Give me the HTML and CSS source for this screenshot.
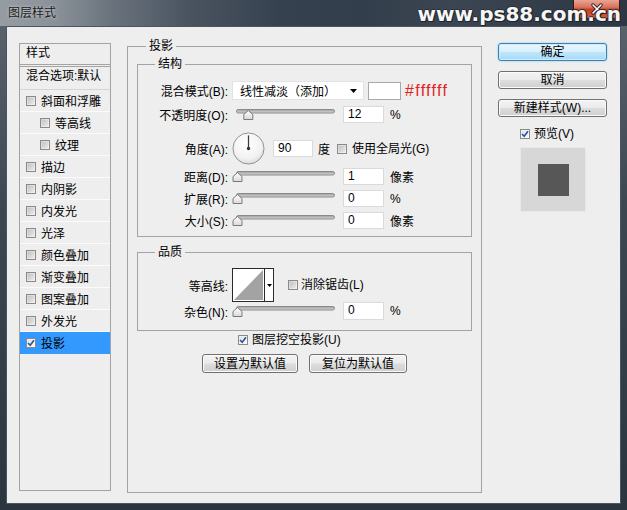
FILE: index.html
```html
<!DOCTYPE html>
<html lang="zh-CN">
<head>
<meta charset="utf-8">
<title>图层样式</title>
<link rel="stylesheet" href="styles.css">
</head>
<body>
<svg class="defs" width="0" height="0" aria-hidden="true">
  <defs>
    <linearGradient id="trackg" x1="0" y1="0" x2="0" y2="1">
      <stop offset="0" stop-color="#9c9c9c"/>
      <stop offset="1" stop-color="#dadada"/>
    </linearGradient>
    <linearGradient id="thumbg" x1="0" y1="0" x2="0" y2="1">
      <stop offset="0" stop-color="#ffffff"/>
      <stop offset="1" stop-color="#d9d9d9"/>
    </linearGradient>
    <radialGradient id="dialg" cx="0.45" cy="0.35" r="0.7">
      <stop offset="0" stop-color="#ffffff"/>
      <stop offset="0.7" stop-color="#f1f1f1"/>
      <stop offset="1" stop-color="#d4d4d4"/>
    </radialGradient>
  </defs>
</svg>
<div class="window">
  <div class="titlebar">
    <span class="title">图层样式</span>
    <span class="close">
      <svg width="14" height="12" viewBox="0 0 14 12"><path d="M3 2 L11 10 M11 2 L3 10" stroke="#3a1a14" stroke-width="3.2" stroke-linecap="round"/><path d="M3 2 L11 10 M11 2 L3 10" stroke="#ffffff" stroke-width="1.6" stroke-linecap="round"/></svg>
    </span>
    <span class="watermark">www.ps88.com.cn</span>
  </div>
  <div class="frame">
    <div class="client">
      <div class="layers">
        <div class="layers-head">样式</div>
        <div class="layers-blend">混合选项:默认</div>
        <div class="layer"><span class="cb"></span>斜面和浮雕</div>
        <div class="layer sub"><span class="cb"></span>等高线</div>
        <div class="layer sub"><span class="cb"></span>纹理</div>
        <div class="layer"><span class="cb"></span>描边</div>
        <div class="layer"><span class="cb"></span>内阴影</div>
        <div class="layer"><span class="cb"></span>内发光</div>
        <div class="layer"><span class="cb"></span>光泽</div>
        <div class="layer"><span class="cb"></span>颜色叠加</div>
        <div class="layer"><span class="cb"></span>渐变叠加</div>
        <div class="layer"><span class="cb"></span>图案叠加</div>
        <div class="layer"><span class="cb"></span>外发光</div>
        <div class="layer active"><span class="cb checked"><svg width="8" height="8" viewBox="0 0 8 8"><path d="M1 4 L3.2 6.3 L7 1.2" fill="none" stroke="#2c57a3" stroke-width="1.7"/></svg></span>投影</div>
      </div>

      <div class="group main">
        <div class="legend main-legend">投影</div>

        <div class="group sub-group structure">
          <div class="legend">结构</div>

          <div class="row row-blend">
            <span class="label">混合模式(B):</span>
            <div class="select"><span>线性减淡（添加）</span><svg width="7" height="4" viewBox="0 0 7 4"><polygon points="0,0 7,0 3.5,4" fill="#000"/></svg></div>
            <span class="swatch"></span>
            <span class="hex">#ffffff</span>
          </div>

          <div class="row row-field gap6">
            <span class="label">不透明度(O):</span>
            <svg class="slider" width="105" height="13" viewBox="0 0 105 13"><rect x="4.5" y="1.5" width="98" height="3.5" rx="1.75" fill="url(#trackg)" stroke="#8a8a8a"/><path d="M16.3 2.5 L20.8 6.5 V11.5 H11.8 V6.5 Z" fill="url(#thumbg)" stroke="#7a7a7a"/></svg>
            <span class="field">12</span>
            <span class="unit">%</span>
          </div>

          <div class="row row-angle">
            <span class="label">角度(A):</span>
            <svg class="dial" width="34" height="34" viewBox="0 0 34 34"><circle cx="17" cy="17" r="16" fill="url(#dialg)" stroke="#8f8f8f"/><line x1="17" y1="17" x2="17" y2="3.5" stroke="#3a3a3a" stroke-width="1.3"/><circle cx="17" cy="17" r="1.7" fill="#333"/></svg>
            <span class="field field-angle">90</span>
            <span class="unit-deg">度</span>
            <span class="cb cb-global"></span>
            <span class="cb-text">使用全局光(G)</span>
          </div>

          <div class="row row-field gap3">
            <span class="label">距离(D):</span>
            <svg class="slider" width="105" height="13" viewBox="0 0 105 13"><rect x="4.5" y="1.5" width="98" height="3.5" rx="1.75" fill="url(#trackg)" stroke="#8a8a8a"/><path d="M5.5 2.5 L10 6.5 V11.5 H1 V6.5 Z" fill="url(#thumbg)" stroke="#7a7a7a"/></svg>
            <span class="field">1</span>
            <span class="unit">像素</span>
          </div>

          <div class="row row-field gap5">
            <span class="label">扩展(R):</span>
            <svg class="slider" width="105" height="13" viewBox="0 0 105 13"><rect x="4.5" y="1.5" width="98" height="3.5" rx="1.75" fill="url(#trackg)" stroke="#8a8a8a"/><path d="M5.5 2.5 L10 6.5 V11.5 H1 V6.5 Z" fill="url(#thumbg)" stroke="#7a7a7a"/></svg>
            <span class="field">0</span>
            <span class="unit">%</span>
          </div>

          <div class="row row-field gap5">
            <span class="label">大小(S):</span>
            <svg class="slider" width="105" height="13" viewBox="0 0 105 13"><rect x="4.5" y="1.5" width="98" height="3.5" rx="1.75" fill="url(#trackg)" stroke="#8a8a8a"/><path d="M5.5 2.5 L10 6.5 V11.5 H1 V6.5 Z" fill="url(#thumbg)" stroke="#7a7a7a"/></svg>
            <span class="field">0</span>
            <span class="unit">像素</span>
          </div>
        </div>

        <div class="group sub-group quality">
          <div class="legend">品质</div>

          <div class="row row-contour">
            <span class="label">等高线:</span>
            <svg class="contour" width="42" height="34" viewBox="0 0 42 34"><rect x="0.5" y="0.5" width="41" height="33" fill="#fff" stroke="#2a2a2a"/><polygon points="2,32 31,2 31,32" fill="#a3a3a3"/><line x1="32.5" y1="1" x2="32.5" y2="33" stroke="#2a2a2a"/><polygon points="35,16 40,16 37.5,19" fill="#000"/></svg>
            <span class="cb cb-anti"></span>
            <span class="cb-text">消除锯齿(L)</span>
          </div>

          <div class="row row-field row-noise">
            <span class="label">杂色(N):</span>
            <svg class="slider" width="105" height="13" viewBox="0 0 105 13"><rect x="4.5" y="1.5" width="98" height="3.5" rx="1.75" fill="url(#trackg)" stroke="#8a8a8a"/><path d="M5.5 2.5 L10 6.5 V11.5 H1 V6.5 Z" fill="url(#thumbg)" stroke="#7a7a7a"/></svg>
            <span class="field field-noise">0</span>
            <span class="unit">%</span>
          </div>
        </div>

        <div class="knockout">
          <span class="cb checked"><svg width="8" height="8" viewBox="0 0 8 8"><path d="M1 4 L3.2 6.3 L7 1.2" fill="none" stroke="#2c57a3" stroke-width="1.7"/></svg></span>
          <span class="cb-text">图层挖空投影(U)</span>
        </div>

        <div class="defaults">
          <span class="btn btn-set">设置为默认值</span>
          <span class="btn btn-reset">复位为默认值</span>
        </div>
      </div>

      <div class="actions">
        <span class="btn btn-default">确定</span>
        <span class="btn btn-side">取消</span>
        <span class="btn btn-side">新建样式(W)...</span>
        <div class="preview-check">
          <span class="cb checked"><svg width="8" height="8" viewBox="0 0 8 8"><path d="M1 4 L3.2 6.3 L7 1.2" fill="none" stroke="#2c57a3" stroke-width="1.7"/></svg></span>
          <span class="cb-text">预览(V)</span>
        </div>
        <div class="preview"><span class="preview-square"></span></div>
      </div>
    </div>
  </div>
</div>
</body>
</html>
```
FILE: styles.css
```css
* { box-sizing: border-box; }

html, body {
  margin: 0;
  padding: 0;
}

body {
  width: 627px;
  height: 510px;
  overflow: hidden;
  background: #313b47;
  font-family: "Liberation Sans", "Noto Sans CJK SC", sans-serif;
  font-size: 12px;
  color: #000;
}

.defs {
  position: absolute;
  width: 0;
  height: 0;
}

.window {
  width: 627px;
  height: 510px;
  display: flex;
  flex-direction: column;
  background: linear-gradient(180deg, #5d666f 0%, #3d4752 40%, #2b3540 100%);
}

/* ---------- title bar ---------- */
.titlebar {
  position: relative;
  height: 26px;
  flex: none;
  display: flex;
  align-items: flex-start;
  background: linear-gradient(90deg, #959ca2 0%, #8a9198 9%, #69727c 18%, #4a5461 30%, #36414f 45%, #333e4c 58%, #3c4652 72%, #2d3743 100%);
}

.title {
  padding: 5px 0 0 8px;
  line-height: 16px;
  color: #1a1a1a;
  text-shadow: 0 0 3px rgba(255, 255, 255, 0.7);
}

.close {
  margin-left: auto;
  margin-right: 7px;
  width: 47px;
  height: 19px;
  border: 1px solid #3b1a14;
  border-top: none;
  border-radius: 0 0 5px 5px;
  background: linear-gradient(180deg, #e9a493 0%, #d9745f 40%, #c63d22 52%, #d25a3f 100%);
  display: flex;
  align-items: center;
  justify-content: center;
}

.watermark {
  position: absolute;
  right: 6px;
  top: 2px;
  font-family: "DejaVu Sans", sans-serif;
  font-weight: bold;
  font-size: 20px;
  line-height: 24px;
  color: #f6f6f6;
  text-shadow: 1px 1px 0 #1e2329, -1px 0 0 #2a3038, 0 -1px 0 #2a3038, 1px 0 0 #1e2329, 0 1px 0 #1e2329;
}

/* ---------- frame & client ---------- */
.frame {
  flex: 1;
  padding: 0 6px 6px;
  display: flex;
}

.client {
  flex: 1;
  display: flex;
  align-items: flex-start;
  padding: 16px 0 0 12px;
  background: #eeeeee;
  border: 1px solid #4b5560;
}

/* ---------- left layer list ---------- */
.layers {
  width: 92px;
  height: 448px;
  flex: none;
  border: 1px solid #a3a3a3;
}

.layers-head {
  height: 23px;
  line-height: 18px;
  padding-left: 6px;
  border-bottom: 3px double #a3a3a3;
}

.layers-blend {
  height: 23px;
  line-height: 18px;
  padding-left: 6px;
  border-bottom: 1px solid #d6d6d6;
  white-space: nowrap;
}

.layer {
  height: 22px;
  display: flex;
  align-items: center;
  padding-left: 6px;
  border-bottom: 1px solid #fbfbfb;
  white-space: nowrap;
}

.layer.sub {
  padding-left: 20px;
}

.layer.active {
  background: #3399ff;
  border-bottom-color: #3399ff;
}

.layer .cb {
  margin-right: 5px;
}

/* ---------- checkbox ---------- */
.cb {
  width: 10px;
  height: 10px;
  flex: none;
  display: inline-flex;
  align-items: center;
  justify-content: center;
  border: 1px solid #8a8a8a;
  background: linear-gradient(135deg, #bdbdbd 0%, #d6d6d6 50%, #eeeeee 100%);
  box-shadow: inset 0 0 0 1px rgba(255, 255, 255, 0.35);
}

.cb.checked {
  background: linear-gradient(135deg, #e2e2e2 0%, #fbfbfb 100%);
}

.cb-text {
  white-space: nowrap;
  line-height: 14px;
}

/* ---------- group boxes ---------- */
.group {
  border: 1px solid #a3a3a3;
  flex: none;
}

.main {
  width: 355px;
  height: 447px;
  margin: 3px 0 0 16px;
}

.legend {
  width: max-content;
  height: 14px;
  line-height: 14px;
  margin: -8px 0 0 17px;
  padding: 0 3px;
  background: #eeeeee;
}

.main-legend {
  margin-left: 18px;
}

.sub-group {
  width: 335px;
  margin-left: 9px;
}

.structure {
  margin-top: 11px;
  padding-bottom: 7px;
}

.quality {
  margin-top: 15px;
  padding-bottom: 10px;
}

/* ---------- rows ---------- */
.row {
  display: flex;
  align-items: center;
}

.label {
  width: 90px;
  flex: none;
  margin-right: 4px;
  text-align: right;
  white-space: nowrap;
}

.row-blend {
  height: 19px;
  margin-top: 10px;
}

.select {
  width: 132px;
  height: 19px;
  display: flex;
  align-items: center;
  justify-content: space-between;
  padding: 0 6px 0 7px;
  background: #fff;
  border: 1px solid #e2e2e2;
  white-space: nowrap;
}

.swatch {
  width: 33px;
  height: 18px;
  margin-left: 4px;
  background: #fff;
  border: 1px solid #a8a8a8;
}

.hex {
  margin-left: 4px;
  color: #e3221f;
  font-size: 16px;
  line-height: 19px;
  letter-spacing: 1.3px;
}

.row-field {
  height: 17px;
}

.gap6 { margin-top: 6px; }
.gap5 { margin-top: 5px; }
.gap3 { margin-top: 3px; }

.slider {
  flex: none;
  margin-right: 6px;
}

.field {
  width: 41px;
  height: 17px;
  flex: none;
  padding-left: 4px;
  line-height: 15px;
  background: #fff;
  border: 1px solid #dadada;
}

.unit {
  margin-left: 6px;
  white-space: nowrap;
}

.row-angle {
  height: 33px;
  margin-top: 9px;
}

.dial {
  flex: none;
  width: 33px;
  height: 33px;
}

.field-angle {
  width: 40px;
  margin-left: 8px;
}

.unit-deg {
  margin-left: 5px;
}

.cb-global {
  margin: 0 5px 0 7px;
}

.row-contour {
  height: 34px;
  margin-top: 9px;
}

.contour {
  flex: none;
}

.cb-anti {
  margin: 0 3px 0 14px;
}

.row-noise {
  height: 18px;
}

.field-noise {
  height: 18px;
}

/* ---------- bottom of main group ---------- */
.knockout {
  height: 14px;
  margin-top: 2px;
  padding-left: 110px;
  display: flex;
  align-items: center;
}

.knockout .cb {
  margin-right: 4px;
}

.defaults {
  margin-top: 7px;
  display: flex;
  justify-content: center;
  gap: 11px;
}

/* ---------- buttons ---------- */
.btn {
  display: flex;
  align-items: center;
  justify-content: center;
  height: 19px;
  border: 1px solid #707070;
  border-radius: 3px;
  background: linear-gradient(180deg, #f3f3f3 0%, #ebebeb 48%, #dddddd 52%, #cfcfcf 100%);
  box-shadow: inset 0 0 0 1px #fbfbfb;
  white-space: nowrap;
  line-height: 16px;
}

.btn-set { width: 96px; }
.btn-reset { width: 98px; }

.actions {
  width: 109px;
  flex: none;
  margin-left: 16px;
  display: flex;
  flex-direction: column;
}

.btn-default {
  height: 18px;
  border-color: #3c7fb1;
  background: linear-gradient(180deg, #eaf6fd 0%, #d9f0fc 48%, #bee6fd 52%, #a7d9f5 100%);
  box-shadow: inset 0 0 0 1px #c9ecff, 0 0 2px #74c4f0;
}

.btn-side {
  height: 18px;
  margin-top: 10px;
}

.preview-check {
  height: 14px;
  margin-top: 10px;
  padding-left: 22px;
  display: flex;
  align-items: center;
}

.preview-check .cb {
  margin-right: 4px;
}

.preview {
  width: 66px;
  height: 65px;
  margin: 6px 0 0 22px;
  display: flex;
  align-items: center;
  justify-content: center;
  background: #d7d7d7;
  border: 1px solid #e8e8e8;
}

.preview-square {
  width: 31px;
  height: 32px;
  background: #575757;
}
```
